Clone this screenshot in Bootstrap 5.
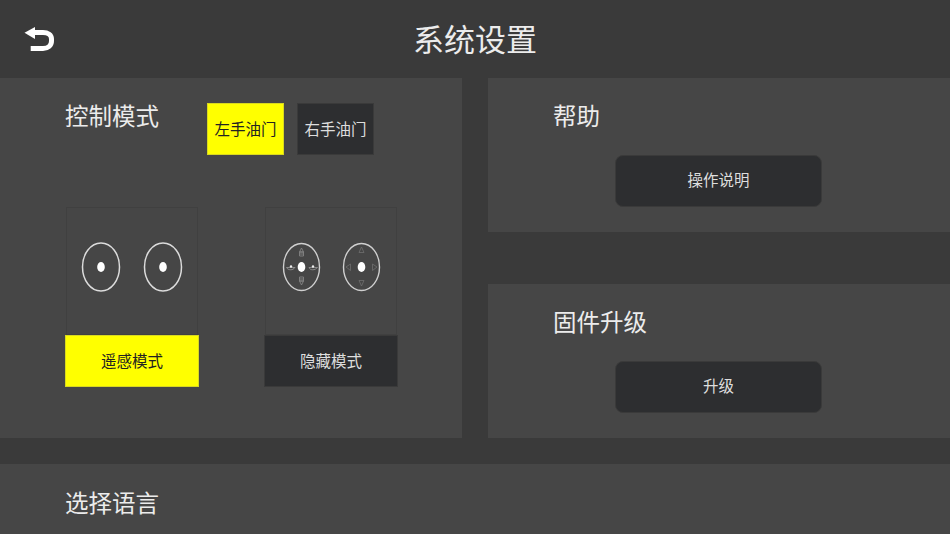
<!DOCTYPE html>
<html lang="zh">
<head>
  <meta charset="utf-8">
  <title>系统设置</title>
  <link href="https://cdn.jsdelivr.net/npm/bootstrap@5.3.0/dist/css/bootstrap.min.css" rel="stylesheet">
  <style>
    html, body { height: 534px; overflow: hidden; }
    body { background: #3a3a3a; color: #f0f0f0; font-family: "Noto Sans CJK SC", "Liberation Sans", sans-serif; }
    .top-bar { height: 78px; padding-left: 24px; }
    .top-title { font-size: 31px; font-weight: 400; margin: 0; line-height: 75px; color: #ececec; }
    .back-btn { width: 32px; height: 28px; display: block; }
    .title-row { height: 78px; }
    .main-row { height: 360px; gap: 26px; }
    .panel-box { background: #464646; }
    .left-panel { width: 462px; padding: 25px 0 0 65px; }
    .right-col { width: 462px; gap: 52px; }
    .right-box { height: 154px; padding-top: 19px; }
    .panel-title { font-size: 23.500px; font-weight: 400; line-height: 36px; margin: 0; color: #ececec; }
    .mode-title { width: 129px; margin-top: -6px; }
    .hand-btn { width: 77px; height: 52px; font-size: 15.500px; padding: 0 0 1px; border-radius: 0; background: #2d2e30; color: #dedede; border: 1px solid #3a3a3a; }
    .hand-btn.on, .mode-btn.on { background: #ff0; color: #222; border-color: #d8d820; }
    .hand-row { gap: 13px; }
    .mode-row { gap: 65px; margin-top: 52px; }
    .mode-item { width: 134px; }
    .stick-pic { display: block; width: 134px; height: 128px; }
    .mode-btn { width: 134px; height: 52px; font-size: 15.500px; padding: 0; border-radius: 0; background: #2d2e30; color: #dedede; border: 1px solid #3a3a3a; display: block; }
    .right-title { padding-left: 65px; }
    .wide-btn { width: 207px; height: 52px; margin: 22px 0 0 127px; font-size: 15.500px; padding: 0 0 2px; border-radius: 8px; background: #2d2e30; color: #dedede; border: 1px solid #3a3a3a; display: block; }
    .lang-box { height: 70px; margin-top: 26px; padding: 20px 0 0 65px; }
  </style>
</head>
<body>
  <div class="top-bar position-relative">
    <div class="title-row d-flex align-items-center">
      <svg class="back-btn" viewBox="0 0 32 28">
        <path d="M10 7.500H19C24 7.500 27.500 10 27.500 14V16C27.500 20.500 24 23.500 19 23.500H6.700" fill="none" stroke="#fff" stroke-width="5"/>
        <path d="M0.500 7.700L11 2V14Z" fill="#fff"/>
      </svg>
    </div>
    <h1 class="top-title position-absolute top-0 start-0 w-100 text-center">系统设置</h1>
  </div>

  <div class="main-row d-flex">
    <div class="left-panel panel-box">
      <div class="d-flex hand-row">
        <h2 class="panel-title mode-title">控制模式</h2>
        <button class="btn hand-btn on">左手油门</button>
        <button class="btn hand-btn">右手油门</button>
      </div>
      <div class="d-flex mode-row">
        <div class="mode-item">
          <svg class="stick-pic" viewBox="0 0 134 128">
            <rect x="1.500" y="0.500" width="131" height="127" fill="none" stroke="#404040"/>
            <ellipse cx="36" cy="60" rx="18.500" ry="24" fill="none" stroke="#dcdcdc" stroke-width="1.500"/>
            <ellipse cx="36" cy="60" rx="3.800" ry="5" fill="#fff"/>
            <ellipse cx="98" cy="60" rx="18.500" ry="24" fill="none" stroke="#dcdcdc" stroke-width="1.500"/>
            <ellipse cx="98" cy="60" rx="3.800" ry="5" fill="#fff"/>
          </svg>
          <button class="btn mode-btn on">遥感模式</button>
        </div>
        <div class="mode-item">
          <svg class="stick-pic" viewBox="0 0 134 128">
            <rect x="1.500" y="0.500" width="131" height="127" fill="none" stroke="#404040"/>
            <ellipse cx="37.500" cy="60" rx="18" ry="23.500" fill="none" stroke="#d0d0d0" stroke-width="1.400"/>
            <ellipse cx="37.500" cy="60" rx="3.800" ry="5" fill="#fff"/>
            <path d="M35.500 49V45H39.500V49ZM35.500 47H39.500M37.500 41L35.500 45H39.500Z" fill="none" stroke="#8a8a8a" stroke-width=".8"/>
            <path d="M35.500 70V74H39.500V70ZM35.500 72H39.500M37.500 78L35.500 74H39.500Z" fill="none" stroke="#8a8a8a" stroke-width=".8"/>
            <path d="M22.500 60.500C24 63.500 29 63.500 31 60.500H22.500Z" fill="none" stroke="#999" stroke-width=".8"/>
            <circle cx="27" cy="59.500" r="1.200" fill="#eee"/>
            <path d="M45 60.500C46 63.500 51 63.500 53.500 60.500H45Z" fill="none" stroke="#999" stroke-width=".8"/>
            <circle cx="49" cy="59.500" r="1.200" fill="#eee"/>
            <ellipse cx="97.500" cy="60" rx="18" ry="23.500" fill="none" stroke="#d0d0d0" stroke-width="1.400"/>
            <ellipse cx="97.500" cy="60" rx="3.800" ry="5" fill="#fff"/>
            <path d="M97.500 40L95 45.500H100ZM97.500 79L95 73.500H100ZM82 60L86.500 57V63.500ZM113 60L108.500 57V63.500Z" fill="none" stroke="#6e6e6e" stroke-width=".8"/>
          </svg>
          <button class="btn mode-btn">隐藏模式</button>
        </div>
      </div>
    </div>

    <div class="right-col d-flex flex-column">
      <div class="right-box panel-box">
        <h2 class="panel-title right-title">帮助</h2>
        <button class="btn wide-btn">操作说明</button>
      </div>
      <div class="right-box panel-box">
        <h2 class="panel-title right-title">固件升级</h2>
        <button class="btn wide-btn">升级</button>
      </div>
    </div>
  </div>

  <div class="lang-box panel-box">
    <h2 class="panel-title">选择语言</h2>
  </div>

  <script src="https://cdn.jsdelivr.net/npm/bootstrap@5.3.0/dist/js/bootstrap.bundle.min.js"></script>
</body>
</html>
